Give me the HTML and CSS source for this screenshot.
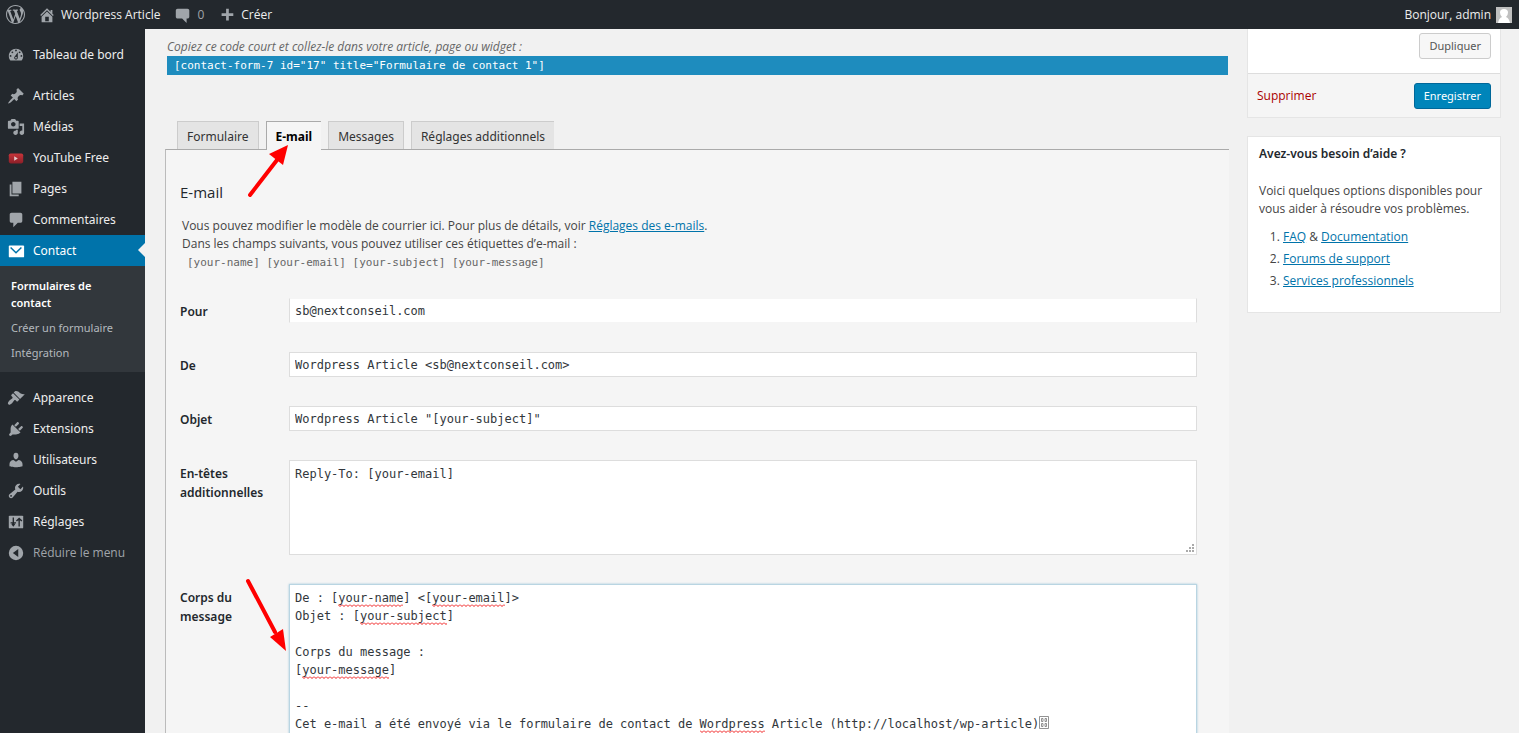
FILE: index.html
```html
<!DOCTYPE html>
<html lang="fr">
<head>
<meta charset="utf-8">
<title>Formulaire de contact</title>
<link rel="stylesheet" href="styles.css">
</head>
<body>
<header class="adminbar">
  <a class="bar-link logo" href="#" aria-label="WordPress"><svg class="bar-icon" viewBox="0 0 20 20"><path d="M20 10c0-5.51-4.49-10-10-10C4.48 0 0 4.49 0 10c0 5.52 4.48 10 10 10 5.51 0 10-4.48 10-10zM7.78 15.37L4.37 6.22c.55-.02 1.17-.08 1.17-.08.5-.06.44-1.13-.06-1.11 0 0-1.45.11-2.37.11-.18 0-.37 0-.58-.01C4.12 2.69 6.87 1.11 10 1.11c2.33 0 4.45.87 6.05 2.34-.68-.11-1.65.39-1.65 1.58 0 .74.45 1.36.9 2.1.35.61.55 1.36.55 2.46 0 1.49-1.4 5-1.4 5l-3.03-8.37c.54-.02.82-.17.82-.17.5-.05.44-1.25-.06-1.22 0 0-1.44.12-2.38.12-.87 0-2.33-.12-2.33-.12-.5-.03-.56 1.2-.06 1.22l.92.08 1.26 3.41zM17.41 10c.24-.64.74-1.87.43-4.25.7 1.29 1.05 2.71 1.05 4.25 0 3.29-1.73 6.24-4.4 7.78.97-2.59 1.94-5.2 2.92-7.78zM6.1 18.09C3.12 16.65 1.11 13.53 1.11 10c0-1.3.23-2.48.72-3.59C3.25 10.3 4.67 14.2 6.1 18.09zm4.03-6.63l2.58 6.98c-.86.29-1.76.45-2.71.45-.79 0-1.57-.11-2.29-.33.81-2.38 1.62-4.74 2.42-7.1z"/></svg></a>
  <a class="bar-link site" href="#"><svg class="bar-icon" viewBox="0 0 20 20"><path d="M16 8.5l1.53 1.53-1.06 1.06L10 4.6l-6.47 6.49-1.06-1.06L10 2.500l4 4v-2h2v4zm-6-2.460l6 5.990V18H4v-5.970zM12 17v-5H8v5h4z"/></svg>Wordpress Article</a>
  <a class="bar-link count" href="#"><svg class="bar-icon" viewBox="0 0 20 20"><path d="M4 3h11c1.100 0 2 .9 2 2v7c0 1.100-.9 2-2 2h-1v5l-5-5H4c-1.100 0-2-.9-2-2V5c0-1.100.9-2 2-2z"/></svg>0</a>
  <a class="bar-link" href="#"><svg class="bar-icon" viewBox="0 0 20 20"><path d="M17 8v3h-5v5H9v-5H4V8h5V3h3v5h5z"/></svg>Créer</a>
  <a class="bar-link account" href="#">Bonjour, admin<svg class="avatar" viewBox="0 0 16 16"><path class="avatar-bg" d="M0 0h16v16H0z"/><path class="avatar-fg" d="M2 16q1-5 4-6-2-2-2-4.500Q4 2 8 2t4 3.500Q12 8 10 10q3 1 4 6z"/></svg></a>
</header>
<div class="shell">
  <nav class="menu" aria-label="Menu principal">
    <a class="item first" href="#"><svg class="icon" viewBox="0 0 20 20"><path fill-rule="evenodd" d="M3.760 16h12.480c1.100-1.370 1.760-3.110 1.760-5 0-4.420-3.580-8-8-8s-8 3.580-8 8c0 1.890.66 3.630 1.760 5zM10 4c.55 0 1 .45 1 1s-.45 1-1 1-1-.45-1-1 .45-1 1-1zM6 6c.55 0 1 .45 1 1s-.45 1-1 1-1-.45-1-1 .45-1 1-1zm8 0c.55 0 1 .45 1 1s-.45 1-1 1-1-.45-1-1 .45-1 1-1zm-5.370 5.550L12 7v6c0 1.100-.9 2-2 2s-2-.9-2-2c0-.57.24-1.080.63-1.450zM4 10c.55 0 1 .45 1 1s-.45 1-1 1-1-.45-1-1 .45-1 1-1zm12 0c.55 0 1 .45 1 1s-.45 1-1 1-1-.45-1-1 .45-1 1-1zm-5 3c0-.55-.45-1-1-1s-1 .45-1 1 .45 1 1 1 1-.45 1-1z"/></svg>Tableau de bord</a>
    <a class="item" href="#"><svg class="icon" viewBox="0 0 20 20"><path d="M10.44 3.020l1.820-1.820 6.360 6.350-1.830 1.820c-1.050-.68-2.480-.57-3.410.36l-.75.75c-.92.93-1.040 2.350-.35 3.410l-1.830 1.820-2.410-2.410-2.800 2.790c-.42.42-3.380 2.710-3.800 2.290s1.860-3.390 2.280-3.810l2.790-2.790L4.100 9.360l1.830-1.820c1.050.69 2.480.57 3.400-.36l.75-.75c.93-.92 1.050-2.350.36-3.410z"/></svg>Articles</a>
    <a class="item" href="#"><svg class="icon" viewBox="0 0 20 20"><path fill-rule="evenodd" d="M13 11V4c0-.55-.45-1-1-1h-1.670L9 1H5L3.670 3H2c-.55 0-1 .45-1 1v7c0 .55.45 1 1 1h10c.55 0 1-.45 1-1zM7 4.500c1.380 0 2.500 1.120 2.500 2.500S8.380 9.500 7 9.500 4.500 8.380 4.500 7 5.620 4.500 7 4.500zM14 6h5v10.500c0 1.380-1.120 2.500-2.500 2.500S14 17.880 14 16.500s1.120-2.500 2.500-2.500c.17 0 .34.02.5.05V9h-3V6zm-4 8.050V13h2v3.500c0 1.380-1.120 2.500-2.500 2.500S7 17.880 7 16.500 8.120 14 9.500 14c.17 0 .34.02.5.05z"/></svg>Médias</a>
    <a class="item" href="#"><svg class="icon" viewBox="0 0 20 20"><defs><linearGradient id="tube" x2="0" y2="1"><stop stop-color="#c8353a"/><stop offset="1" stop-color="#8c1f28"/></linearGradient></defs><rect x="2" y="5" width="16" height="11" rx="2" fill="url(#tube)"/><path d="M8 8l4 2.500-4 2.500z" fill="#e6c9cb"/></svg>YouTube Free</a>
    <a class="item" href="#"><svg class="icon" viewBox="0 0 20 20"><path d="M6 15V2h10v13H6zm-1 1h8v2H3V5h2v11z"/></svg>Pages</a>
    <a class="item" href="#"><svg class="icon" viewBox="0 0 20 20"><path d="M5 2h10c1.100 0 2 .9 2 2v7c0 1.100-.9 2-2 2h-3l-5 5v-5H5c-1.100 0-2-.9-2-2V4c0-1.100.9-2 2-2z"/></svg>Commentaires</a>
    <a class="item current" href="#" aria-current="page"><svg class="icon" viewBox="0 0 20 20"><rect x="2" y="4" width="17" height="13" rx="1"/><path d="M4 6l6 6 6-6" fill="none" stroke="#0073aa" stroke-width="1.600"/></svg>Contact</a>
    <div class="submenu">
      <a class="sub active" href="#">Formulaires de contact</a>
      <a class="sub" href="#">Créer un formulaire</a>
      <a class="sub" href="#">Intégration</a>
    </div>
    <a class="item" href="#"><svg class="icon" viewBox="0 0 20 20"><path d="M14.480 11.060L7.410 3.990l1.500-1.500c.5-.56 2.300-.47 3.510.32 1.210.8 1.430 1.280 2.910 2.100 1.180.64 2.450 1.260 4.450.85zm-.71.71L6.700 4.700 4.930 6.470c-.39.39-.39 1.020 0 1.410l1.060 1.060c.39.39.39 1.030 0 1.420-.6.6-1.430 1.110-2.210 1.690-.35.26-.7.53-1.010.84C1.430 14.230.4 16.080 1.400 17.070c.99 1 2.840-.03 4.180-1.360.31-.31.58-.66.85-1.020.57-.78 1.080-1.610 1.690-2.210.39-.39 1.020-.39 1.410 0l1.060 1.060c.39.39 1.020.39 1.410 0z"/></svg>Apparence</a>
    <a class="item" href="#"><svg class="icon" viewBox="0 0 20 20"><path d="M13.110 4.360L9.870 7.600 8 5.730l3.240-3.240c.35-.34 1.050-.2 1.560.32.52.51.66 1.210.31 1.550zm-8 1.770l.91-1.120 9.010 9.010-1.190.84c-.71.71-2.630 1.160-3.820 1.160H6.140L4.900 17.260c-.59.59-1.540.59-2.120 0-.59-.58-.59-1.530 0-2.120l1.240-1.240v-3.880c0-1.130.4-3.190 1.090-3.890zm7.260 3.970l3.240-3.240c.34-.35 1.040-.21 1.550.31.52.51.66 1.210.31 1.550l-3.240 3.250z"/></svg>Extensions</a>
    <a class="item" href="#"><svg class="icon" viewBox="0 0 20 20"><path d="M10 9.250c-2.270 0-2.730-3.440-2.730-3.440C7 4.020 7.820 2 9.970 2c2.160 0 2.980 2.020 2.710 3.810 0 0-.41 3.440-2.680 3.440zm0 2.570L12.720 10c2.390 0 4.520 2.330 4.520 4.530v2.490s-3.650 1.130-7.240 1.130c-3.650 0-7.240-1.130-7.240-1.130v-2.490c0-2.250 1.940-4.480 4.470-4.480z"/></svg>Utilisateurs</a>
    <a class="item" href="#"><svg class="icon" viewBox="0 0 20 20"><path fill-rule="evenodd" d="M16.680 9.770c-1.340 1.340-3.300 1.670-4.950.99l-5.410 6.520c-.99.99-2.590.99-3.580 0s-.99-2.590 0-3.570l6.520-5.420c-.68-1.650-.35-3.610.99-4.950 1.280-1.280 3.120-1.620 4.720-1.060l-2.890 2.890 2.820 2.820 2.860-2.870c.53 1.580.18 3.390-1.080 4.650zM3.810 16.210c.4.39 1.040.39 1.430 0 .4-.4.4-1.040 0-1.430-.39-.4-1.030-.4-1.430 0-.39.39-.39 1.030 0 1.430z"/></svg>Outils</a>
    <a class="item" href="#"><svg class="icon" viewBox="0 0 20 20"><rect x="2" y="3" width="16" height="14" rx="1"/><path d="M7 5v9M4 11h6M13.500 6v9M10.500 9l3-3 3 3M5.500 12L7 14l1.500-2" fill="none" stroke="#23282d" stroke-width="1.500"/></svg>Réglages</a>
    <button class="item collapse" type="button"><svg class="icon" viewBox="0 0 20 20"><path fill-rule="evenodd" d="M10 2a8 8 0 1 1 0 16 8 8 0 0 1 0-16zM12.500 5.500L6.500 10l6 4.500z"/></svg>Réduire le menu</button>
  </nav>
  <main class="content">
    <section class="editor">
      <label class="hint" for="code">Copiez ce code court et collez-le dans votre article, page ou widget :</label>
      <input class="shortcode" id="code" readonly value='[contact-form-7 id="17" title="Formulaire de contact 1"]'>
      <nav class="tabs" aria-label="Sections">
        <a class="tab" href="#">Formulaire</a>
        <a class="tab selected" href="#" aria-current="true">E-mail</a>
        <a class="tab" href="#">Messages</a>
        <a class="tab" href="#">Réglages additionnels</a>
      </nav>
      <form class="panel">
        <h2 class="title">E-mail</h2>
        <p class="intro">Vous pouvez modifier le modèle de courrier ici. Pour plus de détails, voir <a href="#">Réglages des e-mails</a>.<br>Dans les champs suivants, vous pouvez utiliser ces étiquettes d’e-mail :<br><code class="tags">[your-name] [your-email] [your-subject] [your-message]</code></p>
        <div class="fields">
          <label class="name" for="to">Pour</label>
          <input class="field open" id="to" value="sb@nextconseil.com">
          <label class="name" for="from">De</label>
          <input class="field" id="from" value="Wordpress Article &lt;sb@nextconseil.com&gt;">
          <label class="name" for="subject">Objet</label>
          <input class="field" id="subject" value='Wordpress Article "[your-subject]"'>
          <label class="name" for="headers">En-têtes additionnelles</label>
          <div class="area-box">
            <textarea class="area" id="headers" spellcheck="false">Reply-To: [your-email]</textarea>
            <svg class="grip" viewBox="0 0 9 9"><path d="M6 0h2v2H6zM3 3h2v2H3zM6 3h2v2H6zM0 6h2v2H0zM3 6h2v2H3zM6 6h2v2H6z"/></svg>
          </div>
          <label class="name" for="body">Corps du message</label>
          <div class="area-box">
            <textarea class="area tall" id="body" spellcheck="false">De : [your-name] &lt;[your-email]&gt;
Objet : [your-subject]

Corps du message :
[your-message]

--
Cet e-mail a été envoyé via le formulaire de contact de Wordpress Article (http://localhost/wp-article)</textarea>
            <div class="spelling" aria-hidden="true">
              <i class="w1"></i><i class="w2"></i><i class="w3"></i><i class="w4"></i><i class="w5"></i>
              <svg class="control-char" viewBox="0 0 10 13"><path d="M.5.5h9v12h-9zM2.500 2.500h1.500v3h-1.500zM6 2.500h1.500v3H6zM2.500 7.500h1.500v3h-1.500zM6 7.500h1.500v3H6z"/></svg>
            </div>
          </div>
        </div>
      </form>
      <svg class="pointer tab-pointer" viewBox="0 0 42 54"><path d="M3 51L30 16" /><polygon points="41,1 22,10 36,21"/></svg>
      <svg class="pointer body-pointer" viewBox="0 0 42 74"><path d="M3 3L30 54"/><polygon points="41,73 25,59 38,51"/></svg>
    </section>
    <aside class="side">
      <section class="card actions">
        <div class="row"><button class="btn" type="button">Dupliquer</button></div>
        <div class="row foot"><a class="delete" href="#">Supprimer</a><button class="btn primary" type="button">Enregistrer</button></div>
      </section>
      <section class="card help">
        <h3 class="help-title">Avez-vous besoin d’aide ?</h3>
        <p class="help-text">Voici quelques options disponibles pour vous aider à résoudre vos problèmes.</p>
        <ol class="help-list">
          <li><a href="#">FAQ</a> &amp; <a href="#">Documentation</a></li>
          <li><a href="#">Forums de support</a></li>
          <li><a href="#">Services professionnels</a></li>
        </ol>
      </section>
    </aside>
  </main>
</div>
</body>
</html>
```
FILE: styles.css
```css
* { box-sizing: border-box; }
body {
  margin: 0;
  height: 100vh;
  display: flex;
  flex-direction: column;
  overflow: hidden;
  background: #f1f1f1;
  color: #444;
  font: 12px/18px "Open Sans", "Noto Sans", sans-serif;
}
a { color: #0073aa; }

.adminbar {
  display: flex;
  align-items: center;
  gap: 14px;
  height: 29px;
  flex: none;
  padding: 0 7px 0 6px;
  background: #23282d;
}
.bar-link {
  display: flex;
  align-items: center;
  gap: 5px;
  color: #eee;
  text-decoration: none;
}
.bar-icon { width: 18px; height: 18px; fill: #a0a5aa; }
.logo .bar-icon { width: 19px; height: 19px; }
.site { margin-left: -1px; }
.count { color: #a0a5aa; }
.account { margin-left: auto; }
.avatar { width: 16px; height: 16px; }
.avatar-bg { fill: #c0c0c0; }
.avatar-fg { fill: #fff; }

.shell { display: flex; flex: 1; min-height: 0; }
.menu {
  width: 145px;
  flex: none;
  padding-top: 10px;
  background: #23282d;
}
.item {
  display: flex;
  align-items: center;
  gap: 8px;
  width: 100%;
  height: 31px;
  padding: 0 0 0 7px;
  border: 0;
  background: none;
  color: #eee;
  font: 12px/18px "Noto Sans", "Open Sans", sans-serif;
  text-decoration: none;
  white-space: nowrap;
}
.first { margin-bottom: 10px; }
.icon { width: 18px; height: 18px; flex: none; fill: #a0a5aa; }
.current { position: relative; background: #0073aa; color: #fff; }
.current .icon { fill: #fff; }
.current::after {
  content: "";
  position: absolute;
  right: 0;
  top: 8px;
  border: 7px solid transparent;
  border-left: 0;
  border-right-color: #f1f1f1;
}
.collapse { color: #a0a5aa; font-family: "Open Sans", sans-serif; }
.submenu { margin-bottom: 10px; padding: 7px 0; background: #32373c; }
.sub {
  display: block;
  padding: 4px 11px;
  color: #b4b9be;
  font-family: "Noto Sans", sans-serif;
  font-size: 11px;
  line-height: 17px;
  text-decoration: none;
}
.active { color: #fff; font-weight: 600; padding-right: 40px; }

.content {
  display: flex;
  align-items: flex-start;
  gap: 18px;
  flex: 1;
  min-width: 0;
  padding: 0 18px 0 20px;
}
.editor { position: relative; flex: 1; min-width: 0; padding-top: 8px; }
.hint { display: block; padding-left: 2px; color: #666; font-style: italic; line-height: 19px; }
.shortcode {
  display: block;
  width: calc(100% - 3px);
  height: 19px;
  margin: 0 1px 0 2px;
  padding: 0 7px;
  border: 0;
  background: #1e8cbe;
  color: #fff;
  font: 11px/19px "DejaVu Sans Mono", monospace;
}
.tabs { display: flex; gap: 7px; margin-top: 46px; padding-left: 12px; }
.tab {
  height: 28px;
  padding: 0 9px;
  border: 1px solid #ccc;
  border-bottom: 0;
  background: #e4e4e4;
  color: #333;
  font-family: "Noto Sans", sans-serif;
  line-height: 29px;
  text-decoration: none;
  white-space: nowrap;
}
.tab:last-child { border-right: 0; }
.selected {
  position: relative;
  height: 29px;
  margin-bottom: -1px;
  border-color: #aaa;
  border-right: 0;
  background: #f5f5f5;
  color: #000;
  font-weight: 700;
}
.panel {
  padding: 30px 32px 0 14px;
  border-top: 1px solid #aaa;
  border-left: 1px solid #bbb;
  background: #f5f5f5;
}
.title { margin: 0; color: #23282d; font-size: 15px; font-weight: 400; line-height: 24px; }
.intro { margin: 13px 0 26px 2px; }
.tags { padding-left: 5px; color: #666; font: 11px/18px "DejaVu Sans Mono", monospace; }

.fields { display: grid; grid-template-columns: 80px 1fr; gap: 29px 29px; }
.name {
  padding-top: 4px;
  color: #23282d;
  font-family: "Noto Sans", sans-serif;
  font-weight: 600;
  line-height: 19px;
}
.field, .area {
  display: block;
  width: 100%;
  border: 1px solid #ddd;
  background: #fff;
  color: #32373c;
  font: 12px/18px "DejaVu Sans Mono", monospace;
  outline: 0;
}
.field { height: 25px; padding: 2px 5px; }
.open { border-top-color: #f5f5f5; border-bottom-color: #f5f5f5; }
.area-box { position: relative; }
.area { height: 95px; padding: 4px 5px; resize: none; }
.tall { height: 324px; border-color: #b9d5e2; box-shadow: 0 0 2px #9fc6d9; overflow: hidden; }
.grip { position: absolute; right: 2px; bottom: 2px; width: 9px; height: 9px; fill: #aaa; }

/* Spelling marks sit on the message's own character grid. */
.spelling {
  position: absolute;
  top: 5px;
  left: 6px;
  font: 12px/18px "DejaVu Sans Mono", monospace;
  pointer-events: none;
}
.spelling i {
  position: absolute;
  height: 3px;
  background: url("data:image/svg+xml,%3Csvg xmlns='http://www.w3.org/2000/svg' width='4' height='3'%3E%3Cpath d='M0 .5L2 2.5L4 .5' fill='none' stroke='%23e00' stroke-width='.9'/%3E%3C/svg%3E");
}
.w1 { top: 15px; left: 6ch; width: 9ch; }
.w2 { top: 15px; left: 19ch; width: 10ch; }
.w3 { top: 33px; left: 9ch; width: 12ch; }
.w4 { top: 87px; left: 1ch; width: 12ch; }
.w5 { top: 141px; left: 56ch; width: 9ch; }
.control-char {
  position: absolute;
  top: 127px;
  left: 103ch;
  width: 10px;
  height: 13px;
  fill: none;
  stroke: #777;
  stroke-width: .8;
}

.pointer { position: absolute; overflow: visible; fill: #f00; stroke: none; }
.pointer path { stroke: #f00; stroke-width: 4; stroke-linecap: round; }
.tab-pointer { left: 82px; top: 115px; width: 42px; height: 54px; }
.body-pointer { left: 80px; top: 549px; width: 42px; height: 74px; }

.side { width: 254px; flex: none; }
.card { border: 1px solid #e5e5e5; background: #fff; }
.actions { margin-bottom: 18px; border-top: 0; }
.row { display: flex; justify-content: flex-end; align-items: center; height: 44px; padding: 0 9px 10px; }
.foot { justify-content: space-between; padding-bottom: 0; border-top: 1px solid #ddd; background: #f5f5f5; }
.btn {
  height: 26px;
  padding: 0 9px;
  border: 1px solid #ccc;
  border-radius: 3px;
  background: #f7f7f7;
  color: #555;
  font: 11px/24px "Noto Sans", "Open Sans", sans-serif;
}
.primary { border-color: #006799; background: #0085ba; color: #fff; }
.delete { color: #a00; text-decoration: none; }
.help { padding: 8px 11px 18px; }
.help-title {
  margin: 0 0 19px;
  color: #23282d;
  font-family: "Noto Sans", sans-serif;
  font-size: 12px;
  font-weight: 600;
  line-height: 18px;
}
.help-text { margin: 0 0 10px; }
.help-list { margin: 0; padding-left: 24px; }
.help-list li { margin-bottom: 4px; }
```
